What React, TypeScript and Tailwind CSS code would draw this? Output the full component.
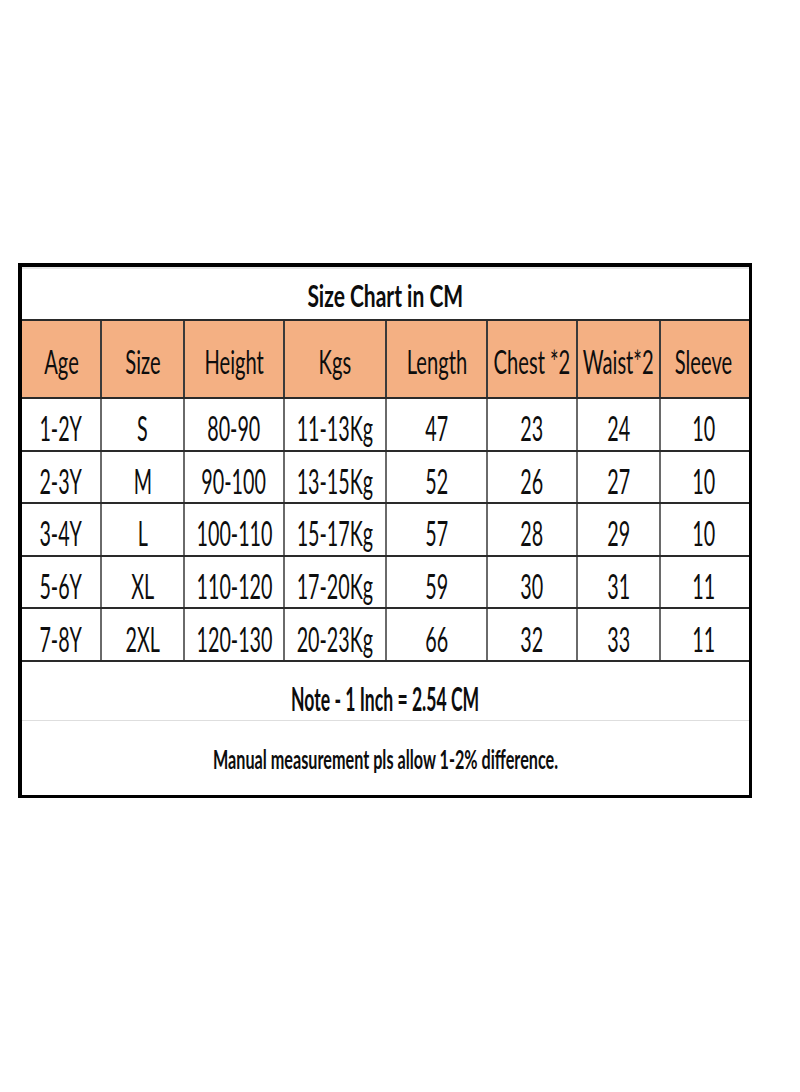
import React from "react";

const headers = ["Age", "Size", "Height", "Kgs", "Length", "Chest *2", "Waist*2", "Sleeve"];
const rows = [
  ["1-2Y", "S", "80-90", "11-13Kg", "47", "23", "24", "10"],
  ["2-3Y", "M", "90-100", "13-15Kg", "52", "26", "27", "10"],
  ["3-4Y", "L", "100-110", "15-17Kg", "57", "28", "29", "10"],
  ["5-6Y", "XL", "110-120", "17-20Kg", "59", "30", "31", "11"],
  ["7-8Y", "2XL", "120-130", "20-23Kg", "66", "32", "33", "11"],
];

const gridCols = "grid grid-cols-[78px_83px_100px_102px_101px_90px_83px_88px]";

export default function App() {
  return (
    <div className="w-[800px] h-[1092px] bg-white font-['Lato',_'Open_Sans',_sans-serif] text-[#0d0d0d]">
      <div className="pt-[263px] pl-[18px]">
        <div className="w-[734px] h-[535px] border-4 border-b-[3px] border-r-[3px] border-black flex flex-col">
          {/* Title */}
          <div className="h-[54px] border-t-2 border-t-[#e6e6e6] border-b-2 border-b-[#2a2a2a] flex items-center justify-center">
            <span className="inline-block whitespace-nowrap text-[30px] leading-none font-bold scale-x-[0.70] translate-y-[1px]">
              Size Chart in CM
            </span>
          </div>
          {/* Header */}
          <div className={gridCols + " h-[78px] bg-[#f4b083] border-b-2 border-[#2a2a2a]"}>
            {headers.map((h, i) => (
              <div
                key={h}
                className={"flex items-center justify-center " + (i > 0 ? "border-l-2 border-[#3a3a3a]" : "")}
              >
                <span className="inline-block whitespace-nowrap text-[32px] leading-none scale-x-[0.63] translate-y-[3px]">
                  {h}
                </span>
              </div>
            ))}
          </div>
          {/* Data rows */}
          {rows.map((r, ri) => (
            <div key={ri} className={gridCols + " h-[52.6px] border-b-2 border-[#2a2a2a]"}>
              {r.map((c, ci) => (
                <div
                  key={ci}
                  className={"flex items-center justify-center " + (ci > 0 ? "border-l-2 border-[#6a6a6a]" : "")}
                >
                  <span className="inline-block whitespace-nowrap text-[34px] leading-none scale-x-[0.58] translate-y-[4px]">
                    {c}
                  </span>
                </div>
              ))}
            </div>
          ))}
          {/* Note */}
          <div className="h-[59px] border-b border-[#dedede] flex items-center justify-center">
            <span className="inline-block whitespace-nowrap text-[32px] leading-none font-bold scale-x-[0.55] translate-y-[8px]">
              Note - 1 Inch = 2.54 CM
            </span>
          </div>
          <div className="flex-1 flex items-center justify-center">
            <span className="inline-block whitespace-nowrap text-[27px] leading-none font-bold scale-x-[0.60] translate-y-[1px]">
              Manual measurement pls allow 1-2% difference.
            </span>
          </div>
        </div>
      </div>
    </div>
  );
}
